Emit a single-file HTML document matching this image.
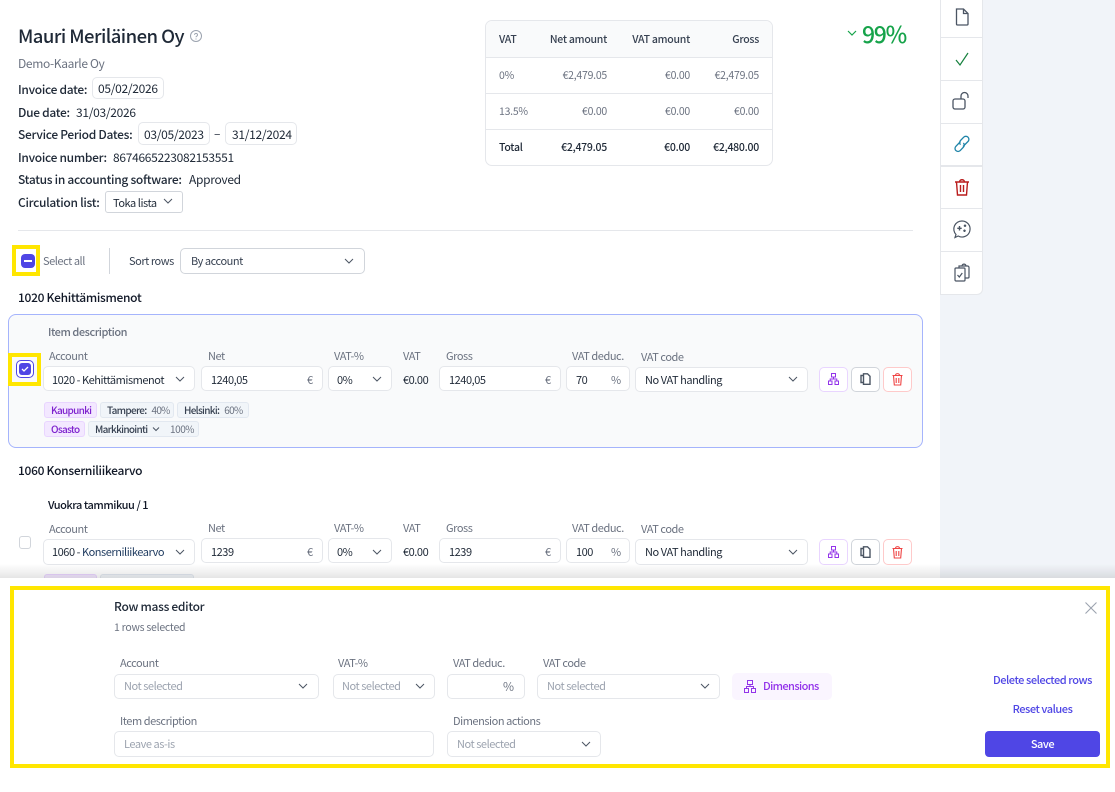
<!DOCTYPE html>
<html><head><meta charset="utf-8"><style>
html,body{margin:0;padding:0;background:#fff}
#p{position:relative;width:1115px;height:792px;overflow:hidden;background:#fff;font-family:"Noto Sans CJK JP","Liberation Sans",sans-serif;font-size:12px;color:#1f2937}
.t{position:absolute;height:16px;line-height:16px;white-space:nowrap;letter-spacing:-.3px}
.r{text-align:right}
.b{position:absolute;box-sizing:border-box;background:#fff;border:1px solid #e5e7eb;border-radius:5px}
.l{color:#6b7280;font-size:11px;letter-spacing:-.45px}
.m{font-weight:500}
.g{color:#6b7280;font-size:11px;letter-spacing:-.45px}
.ph{color:#9ca3af;font-size:11px;letter-spacing:-.45px}
[style*="font-size:11px"]{letter-spacing:-.45px}
[style*="font-size:10.5px"]{letter-spacing:-.25px}
.tag{position:absolute;box-sizing:border-box;height:16px;line-height:14px;font-size:10px;letter-spacing:-.7px;border:1px solid #e2e8f0;background:#f1f5f9;border-radius:3px;font-weight:500;color:#374151;white-space:nowrap;padding-left:6px}
.tag.v{background:#f3e8ff;border-color:#e9d5ff;color:#7e22ce}
.tag span{font-weight:400;color:#6b7280;margin-left:5px}
svg{position:absolute;overflow:visible;fill:none}
.a{position:absolute;left:940px;width:43px;height:1px;background:#e5e7eb}
</style></head><body><div id="p">

<div style="position:absolute;left:940px;top:0;width:175px;height:578px;background:#f1f4f9"></div>
<div style="position:absolute;left:940px;top:0;width:43px;height:295px;box-sizing:border-box;background:#fff;border:1px solid #e5e7eb;border-top:0;border-radius:0 0 6px 0"></div>
<div class="a" style="top:37px"></div><div class="a" style="top:80px"></div><div class="a" style="top:123px"></div><div class="a" style="top:165px;height:2px"></div><div class="a" style="top:208px"></div><div class="a" style="top:251px"></div>

<svg style="left:955px;top:8px" width="14" height="18" stroke="#4b5563" stroke-width="1.3"><path d="M1.5 1h7l4.5 4.5V16a1 1 0 0 1-1 1H2.5a1 1 0 0 1-1-1z"/><path d="M8.5 1v4.5H13"/></svg>
<svg style="left:955px;top:52px" width="14" height="14" stroke="#15803d" stroke-width="1.2"><path d="M1 8l4 5L13 1"/></svg>
<svg style="left:952px;top:92px" width="20" height="20" stroke="#4b5563" stroke-width="1.3"><rect x="1" y="7" width="12" height="10" rx="2"/><path d="M9 7V4a3.5 3.5 0 0 1 7 0v2"/></svg>
<svg style="left:953px;top:135px" width="18" height="18" stroke="#1f84a8" stroke-width="1.3"><path d="M7.5 6.5l-4.600 4.800a3 3 0 0 0 4.300 4.300l3.200-3.400a3 3 0 0 0 0-4.200"/><path d="M10 11.500l5-5a3 3 0 0 0-4.300-4.300L7.500 5.500a3 3 0 0 0 0 4.200"/></svg>
<svg style="left:954px;top:178px" width="16" height="18" stroke="#b91c1c" stroke-width="1.4"><path d="M1 4h14M5.5 4c0-3 5-3 5 0M2.500 4l1 13h9l1-13M6.500 7v7M9.500 7v7"/></svg>
<svg style="left:953px;top:220px" width="18" height="19" stroke="#4b5563" stroke-width="1.2"><path d="M9 1a8 8 0 1 1-3.800 15L2 17.500l1-3A8 8 0 0 1 9 1z"/><path d="M6.500 6v4.500M4.300 8.300h4.400M12 4.500v2.500M10.800 5.700h2.400M11.500 9.500v2.500M10.300 10.700h2.400" stroke-width="1.4"/></svg>
<svg style="left:954px;top:263px" width="17" height="19" stroke="#4b5563" stroke-width="1.2"><rect x="1" y="5" width="10" height="13" rx="1"/><path d="M5 5V3h8.500a1.500 1.500 0 0 1 1.500 1.500V14a1 1 0 0 1-1 1h-3M8 3c0-2.500 4-2.500 4 0M3.500 12l1.800 2 3-4"/></svg>

<div class="t m" style="left:18px;top:24px;height:24px;line-height:24px;font-size:18.5px;letter-spacing:-.55px;color:#1f2937">Mauri Meriläinen Oy</div>
<svg style="left:190px;top:30px" width="12" height="12" stroke="#9ca3af"><circle cx="6" cy="6" r="5.5"/><path d="M4.500 4.800a1.500 1.500 0 1 1 2.200 1.400c-.5.300-.7.500-.7 1M6 8.500v1"/></svg>
<div class="t" style="left:18px;top:56px;color:#6b7280;letter-spacing:-.35px">Demo-Kaarle Oy</div>

<div class="t m" style="left:18px;top:82px">Invoice date:</div>
<div class="b" style="left:92px;top:77px;width:72px;height:22px"></div><div class="t" style="left:98px;top:81px">05/02/2026</div>
<div class="t m" style="left:18px;top:105px">Due date:</div><div class="t" style="left:76px;top:105px">31/03/2026</div>
<div class="t m" style="left:18px;top:127px">Service Period Dates:</div>
<div class="b" style="left:138px;top:122px;width:72px;height:23px"></div><div class="t" style="left:144px;top:127px">03/05/2023</div>
<div class="t" style="left:214px;top:126px">–</div>
<div class="b" style="left:225px;top:122px;width:72px;height:23px"></div><div class="t" style="left:232px;top:127px">31/12/2024</div>
<div class="t m" style="left:18px;top:150px">Invoice number:</div><div class="t" style="left:113px;top:150px">8674665223082153551</div>
<div class="t m" style="left:18px;top:172px">Status in accounting software:</div><div class="t" style="left:189px;top:172px">Approved</div>
<div class="t m" style="left:18px;top:195px">Circulation list:</div>
<div class="b" style="left:105px;top:191px;width:78px;height:22px;border-color:#d1d5db;border-radius:3px"></div><div class="t" style="left:113px;top:195px;font-size:11px">Toka lista</div>
<svg style="left:163px;top:198px" width="10" height="6" stroke="#4b5563"><path d="M1 1l4 4 4-4"/></svg>

<div class="b" style="left:485px;top:20px;width:288px;height:146px;border-radius:7px"></div>
<div style="position:absolute;left:486px;top:21px;width:286px;height:36px;background:#f9fafb;border-bottom:1px solid #e5e7eb;border-radius:6px 6px 0 0"></div>
<div style="position:absolute;left:486px;top:93px;width:286px;height:1px;background:#e5e7eb"></div>
<div style="position:absolute;left:486px;top:129px;width:286px;height:1px;background:#e5e7eb"></div>
<div class="t m" style="left:499px;top:32px;font-size:10.5px;color:#374151">VAT</div>
<div class="t r m" style="left:507px;width:100px;top:32px;font-size:10.5px;color:#374151">Net amount</div>
<div class="t r m" style="left:590px;width:100px;top:32px;font-size:10.5px;color:#374151">VAT amount</div>
<div class="t r m" style="left:659px;width:100px;top:32px;font-size:10.5px;color:#374151">Gross</div>
<div class="t g" style="left:499px;top:68px;font-size:10.5px">0%</div><div class="t r g" style="left:507px;width:100px;top:68px;font-size:10.5px">€2,479.05</div><div class="t r g" style="left:590px;width:100px;top:68px;font-size:10.5px">€0.00</div><div class="t r g" style="left:659px;width:100px;top:68px;font-size:10.5px">€2,479.05</div>
<div class="t g" style="left:499px;top:104px;font-size:10.5px">13.5%</div><div class="t r g" style="left:507px;width:100px;top:104px;font-size:10.5px">€0.00</div><div class="t r g" style="left:590px;width:100px;top:104px;font-size:10.5px">€0.00</div><div class="t r g" style="left:659px;width:100px;top:104px;font-size:10.5px">€0.00</div>
<div class="t m" style="left:499px;top:140px;font-size:10.5px">Total</div><div class="t r m" style="left:507px;width:100px;top:140px;font-size:10.5px">€2,479.05</div><div class="t r m" style="left:590px;width:100px;top:140px;font-size:10.5px">€0.00</div><div class="t r m" style="left:659px;width:100px;top:140px;font-size:10.5px">€2,480.00</div>

<svg style="left:847px;top:30px" width="10" height="6" stroke="#16a34a" stroke-width="1.2"><path d="M1 1l4 4 4-4"/></svg>
<div class="t m" style="left:862px;top:20px;height:26px;line-height:26px;font-size:23px;letter-spacing:-1.3px;color:#16a34a">99%</div>

<div style="position:absolute;left:18px;top:230px;width:895px;height:1px;background:#e5e7eb"></div>

<div style="position:absolute;left:12px;top:245px;width:28px;height:31px;box-sizing:border-box;border:4px solid #ffe600"></div>
<div style="position:absolute;left:21px;top:254px;width:14px;height:14px;background:#4f46e5;border-radius:4px"></div>
<div style="position:absolute;left:24px;top:260px;width:8px;height:2px;background:#fff"></div>
<div class="t g" style="left:43px;top:253px">Select all</div>
<div style="position:absolute;left:109px;top:248px;width:1px;height:26px;background:#d1d5db"></div>
<div class="t" style="left:129px;top:253px;font-size:11px;color:#374151">Sort rows</div>
<div class="b" style="left:180px;top:248px;width:185px;height:26px;border-color:#d1d5db"></div>
<div class="t" style="left:191px;top:253px;font-size:11px;color:#374151">By account</div>
<svg style="left:344px;top:258px" width="10" height="6" stroke="#4b5563"><path d="M1 1l4 4 4-4"/></svg>

<div class="t m" style="left:18px;top:290px;color:#111827">1020 Kehittämismenot</div>

<div style="position:absolute;left:8px;top:314px;width:915px;height:134px;box-sizing:border-box;background:#f9fafb;border:1px solid #a5b4fc;border-radius:8px"></div>
<div class="t m l" style="left:48px;top:324px">Item description</div>
<div style="position:absolute;left:8px;top:353px;width:33px;height:33px;box-sizing:border-box;border:4px solid #ffe600;background:#f9fafb"></div>
<div style="position:absolute;left:16px;top:360px;width:18px;height:18px;box-sizing:border-box;border:1px solid #4f46e5;border-radius:5px;background:#fff"></div>
<div style="position:absolute;left:19px;top:363px;width:12px;height:12px;background:#4f46e5;border-radius:3px"></div>
<svg style="left:21px;top:366px" width="8" height="6" stroke="#fff" stroke-width="1.3"><path d="M1 3l2 2 4-4"/></svg>

<div class="t l" style="left:49px;top:348px">Account</div><div class="t l" style="left:208px;top:348px">Net</div><div class="t l" style="left:334px;top:348px">VAT-%</div><div class="t l" style="left:403px;top:348px">VAT</div><div class="t l" style="left:446px;top:348px">Gross</div><div class="t l" style="left:572px;top:348px">VAT deduc.</div><div class="t l" style="left:641px;top:349px">VAT code</div>

<div class="b" style="left:43px;top:366px;width:152px;height:25px"></div><div class="t" style="left:52px;top:372px;font-size:11px">1020 - Kehittämismenot</div>
<svg style="left:175px;top:376px" width="10" height="6" stroke="#4b5563"><path d="M1 1l4 4 4-4"/></svg>
<div class="b" style="left:201px;top:366px;width:122px;height:25px"></div><div class="t" style="left:211px;top:372px;font-size:11px">1240,05</div><div class="t g" style="left:307px;top:372px">€</div>
<div class="b" style="left:328px;top:366px;width:64px;height:25px"></div><div class="t" style="left:337px;top:372px;font-size:11px">0%</div>
<svg style="left:372px;top:376px" width="10" height="6" stroke="#4b5563"><path d="M1 1l4 4 4-4"/></svg>
<div class="t" style="left:403px;top:372px;font-size:11px">€0.00</div>
<div class="b" style="left:439px;top:366px;width:122px;height:25px"></div><div class="t" style="left:449px;top:372px;font-size:11px">1240,05</div><div class="t g" style="left:545px;top:372px">€</div>
<div class="b" style="left:566px;top:366px;width:64px;height:25px"></div><div class="t" style="left:576px;top:372px;font-size:11px">70</div><div class="t g" style="left:611px;top:372px">%</div>
<div class="b" style="left:635px;top:367px;width:173px;height:25px"></div><div class="t" style="left:645px;top:372px;font-size:11px">No VAT handling</div>
<svg style="left:788px;top:376px" width="10" height="6" stroke="#4b5563"><path d="M1 1l4 4 4-4"/></svg>

<div class="b" style="left:819px;top:367px;width:29px;height:25px;border-color:#e9d5ff"></div>
<svg style="left:828px;top:373px" width="11" height="12" stroke="#9333ea"><rect x="3.5" y=".5" width="4" height="3.5"/><rect x=".5" y="8" width="3.5" height="3.5"/><rect x="7" y="8" width="3.5" height="3.5"/><path d="M5.500 4v2M2.200 8V6h6.600v2"/></svg>
<div class="b" style="left:851px;top:367px;width:29px;height:25px;border-color:#d1d5db"></div>
<svg style="left:860px;top:373px" width="11" height="12" stroke="#4b5563" stroke-width="1.4"><path d="M3.500 9.500H1V2.500h3M3.500 .8h4L10 3.300v8H3.500z"/></svg>
<div class="b" style="left:883px;top:367px;width:29px;height:25px;border-color:#fecaca"></div>
<svg style="left:892px;top:373px" width="11" height="13" stroke="#ef4444" stroke-width="1.1"><path d="M.5 2.500h10M3.500 2.500c0-2.500 4-2.500 4 0M1.500 2.500l.8 9.500h6.400l.8-9.500M4.200 5v5M6.800 5v5"/></svg>

<div class="tag v" style="left:44px;top:402px;width:53px">Kaupunki</div>
<div class="tag" style="left:100px;top:402px;width:74px">Tampere:<span>40%</span></div>
<div class="tag" style="left:177px;top:402px;width:72px">Helsinki:<span>60%</span></div>
<div class="tag v" style="left:44px;top:421px;width:41px">Osasto</div>
<div class="tag" style="left:88px;top:421px;width:111px">Markkinointi</div>
<svg style="left:152px;top:427px" width="8" height="5" stroke="#4b5563"><path d="M1 .5l3 3 3-3"/></svg>
<div class="t g" style="left:170px;top:421px;font-size:10px">100%</div>

<div class="t m" style="left:18px;top:463px;color:#111827">1060 Konserniliikearvo</div>
<div class="t m" style="left:48px;top:497px;font-size:11px;color:#111827">Vuokra tammikuu / 1</div>

<div class="b" style="left:19px;top:536px;width:12px;height:13px;border-color:#d1d5db;border-radius:3px"></div>
<div class="t l" style="left:49px;top:521px">Account</div><div class="t l" style="left:208px;top:520px">Net</div><div class="t l" style="left:334px;top:520px">VAT-%</div><div class="t l" style="left:403px;top:520px">VAT</div><div class="t l" style="left:446px;top:520px">Gross</div><div class="t l" style="left:572px;top:520px">VAT deduc.</div><div class="t l" style="left:641px;top:521px">VAT code</div>

<div class="b" style="left:43px;top:539px;width:152px;height:26px"></div><div class="t" style="left:52px;top:544px;font-size:11px">1060 - <span style="color:#1e3a5f">Konserniliikearvo</span></div>
<svg style="left:175px;top:549px" width="10" height="6" stroke="#4b5563"><path d="M1 1l4 4 4-4"/></svg>
<div class="b" style="left:201px;top:538px;width:122px;height:25px"></div><div class="t" style="left:211px;top:544px;font-size:11px">1239</div><div class="t g" style="left:307px;top:544px">€</div>
<div class="b" style="left:328px;top:538px;width:64px;height:25px"></div><div class="t" style="left:337px;top:544px;font-size:11px">0%</div>
<svg style="left:372px;top:549px" width="10" height="6" stroke="#4b5563"><path d="M1 1l4 4 4-4"/></svg>
<div class="t" style="left:403px;top:544px;font-size:11px">€0.00</div>
<div class="b" style="left:439px;top:538px;width:122px;height:25px"></div><div class="t" style="left:449px;top:544px;font-size:11px">1239</div><div class="t g" style="left:545px;top:544px">€</div>
<div class="b" style="left:566px;top:538px;width:64px;height:25px"></div><div class="t" style="left:576px;top:544px;font-size:11px">100</div><div class="t g" style="left:611px;top:544px">%</div>
<div class="b" style="left:635px;top:539px;width:173px;height:26px"></div><div class="t" style="left:645px;top:544px;font-size:11px">No VAT handling</div>
<svg style="left:788px;top:549px" width="10" height="6" stroke="#4b5563"><path d="M1 1l4 4 4-4"/></svg>
<div class="b" style="left:819px;top:539px;width:29px;height:26px;border-color:#e9d5ff"></div>
<svg style="left:828px;top:546px" width="11" height="12" stroke="#9333ea"><rect x="3.5" y=".5" width="4" height="3.5"/><rect x=".5" y="8" width="3.5" height="3.5"/><rect x="7" y="8" width="3.5" height="3.5"/><path d="M5.500 4v2M2.200 8V6h6.600v2"/></svg>
<div class="b" style="left:851px;top:539px;width:29px;height:26px;border-color:#d1d5db"></div>
<svg style="left:860px;top:546px" width="11" height="12" stroke="#4b5563" stroke-width="1.4"><path d="M3.500 9.500H1V2.500h3M3.500 .8h4L10 3.300v8H3.500z"/></svg>
<div class="b" style="left:883px;top:539px;width:29px;height:26px;border-color:#fecaca"></div>
<svg style="left:892px;top:546px" width="11" height="13" stroke="#ef4444" stroke-width="1.1"><path d="M.5 2.500h10M3.500 2.500c0-2.500 4-2.500 4 0M1.500 2.500l.8 9.500h6.400l.8-9.500M4.200 5v5M6.800 5v5"/></svg>
<div class="tag v" style="left:44px;top:574px;width:53px"></div>
<div class="tag" style="left:100px;top:574px;width:94px"></div>

<div style="position:absolute;left:0;top:564px;width:1115px;height:14px;background:linear-gradient(to bottom,rgba(0,0,0,0),rgba(0,0,0,.1))"></div>
<div style="position:absolute;left:0;top:578px;width:1115px;height:214px;background:#fff"></div>
<div style="position:absolute;left:10px;top:586px;width:1100px;height:182px;box-sizing:border-box;border:4px solid #ffe600"></div>

<div class="t m" style="left:114px;top:599px">Row mass editor</div>
<div class="t g" style="left:114px;top:620px;font-size:10.5px">1 rows selected</div>
<div class="t l" style="left:120px;top:655px">Account</div><div class="t l" style="left:338px;top:655px">VAT-%</div><div class="t l" style="left:453px;top:655px">VAT deduc.</div><div class="t l" style="left:543px;top:655px">VAT code</div>
<div class="b" style="left:114px;top:674px;width:205px;height:25px"></div><div class="t ph" style="left:124px;top:678px">Not selected</div>
<svg style="left:298px;top:683px" width="10" height="6" stroke="#4b5563"><path d="M1 1l4 4 4-4"/></svg>
<div class="b" style="left:333px;top:674px;width:102px;height:25px"></div><div class="t ph" style="left:342px;top:678px">Not selected</div>
<svg style="left:415px;top:683px" width="10" height="6" stroke="#4b5563"><path d="M1 1l4 4 4-4"/></svg>
<div class="b" style="left:447px;top:674px;width:78px;height:25px"></div><div class="t g" style="left:503px;top:679px;font-size:12px">%</div>
<div class="b" style="left:537px;top:674px;width:183px;height:25px"></div><div class="t ph" style="left:547px;top:678px">Not selected</div>
<svg style="left:700px;top:683px" width="10" height="6" stroke="#4b5563"><path d="M1 1l4 4 4-4"/></svg>
<div style="position:absolute;left:732px;top:673px;width:100px;height:27px;background:#faf5ff;border-radius:5px"></div>
<svg style="left:744px;top:680px" width="12" height="13" stroke="#9333ea"><rect x="3.5" y=".5" width="5" height="4"/><rect x=".5" y="8.5" width="4" height="4"/><rect x="7.5" y="8.5" width="4" height="4"/><path d="M6 4.500v2M2.500 8.500v-2h7v2"/></svg>
<div class="t m" style="left:763px;top:678px;font-size:11px;letter-spacing:-.6px;color:#9333ea">Dimensions</div>
<div class="t m r" style="left:942px;width:150px;top:672px;font-size:11px;color:#4f46e5">Delete selected rows</div>
<div class="t m" style="left:985px;width:115px;text-align:center;top:701px;font-size:11px;color:#4f46e5">Reset values</div>
<div style="position:absolute;left:985px;top:731px;width:115px;height:26px;background:#4f46e5;border-radius:4px"></div>
<div class="t m" style="left:985px;width:115px;text-align:center;top:736px;font-size:11px;color:#fff">Save</div>
<svg style="left:1085px;top:602px" width="12" height="12" stroke="#9ca3af" stroke-width="1.1"><path d="M.5 .5l11 11M11.500 .5l-11 11"/></svg>

<div class="t l" style="left:120px;top:713px">Item description</div><div class="t l" style="left:453px;top:713px">Dimension actions</div>
<div class="b" style="left:114px;top:731px;width:320px;height:26px"></div><div class="t ph" style="left:124px;top:736px">Leave as-is</div>
<div class="b" style="left:447px;top:731px;width:154px;height:26px"></div><div class="t ph" style="left:457px;top:736px">Not selected</div>
<svg style="left:581px;top:741px" width="10" height="6" stroke="#4b5563"><path d="M1 1l4 4 4-4"/></svg>

</div></body></html>
